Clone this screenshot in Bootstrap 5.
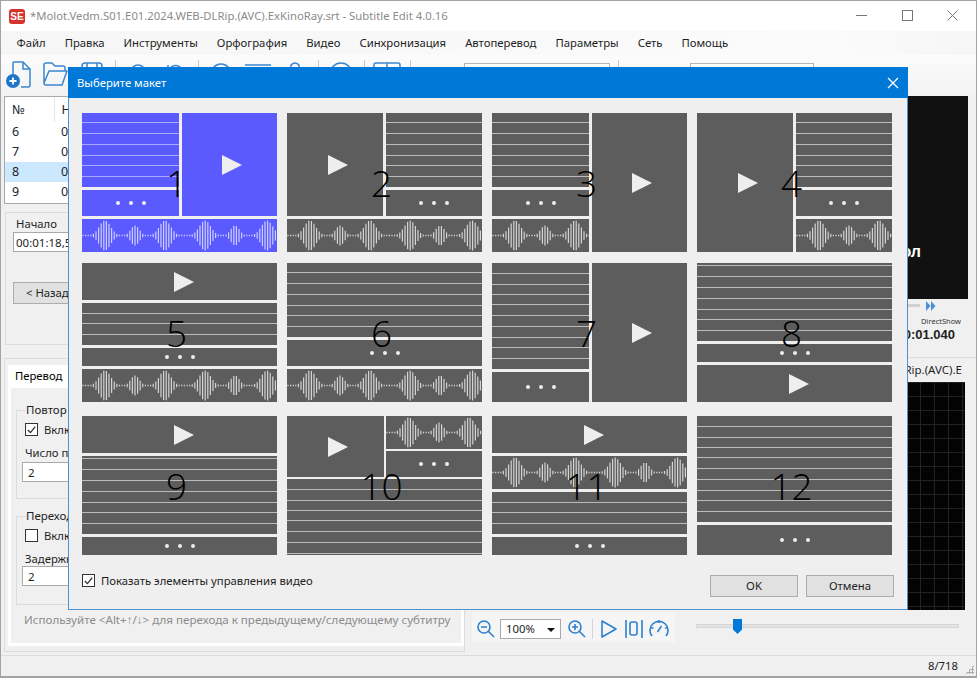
<!DOCTYPE html>
<html lang="ru">
<head>
  <meta charset="UTF-8">
  <title>Subtitle Edit</title>
  <link href="https://cdn.jsdelivr.net/npm/bootstrap@5.3.0/dist/css/bootstrap.min.css" rel="stylesheet">
  <style>
    html, body { height: 100%; }
    body { margin: 0; background: #f0f0f0; color: #1e1e1e; font: 11.3px/16px "Noto Sans", sans-serif; overflow: hidden; }
    .app { position: relative; height: 678px; border: 1px solid #a3a3a3; border-bottom-width: 2px; overflow: hidden; }

    /* window chrome */
    .titlebar { height: 30px; background: #fff; color: #8b8b8b; padding-left: 8px; }
    .logo { width: 16px; height: 15px; border-radius: 3px; background: #d8322c; color: #fff; font: bold 10px/15px "Liberation Sans", sans-serif; text-align: center; margin-right: 5px; }
    .win-btns { margin-left: auto; margin-top: -2px; }
    .win-btns svg { display: block; width: 11px; height: 11px; margin: 0 18px 0 16.5px; stroke: #777; fill: none; }
    .menubar { height: 24px; background: linear-gradient(90deg, #f6f6f6, #fbfbfb 85%, #f6f6f6); padding-left: 6px; flex-wrap: nowrap; }
    .menubar .nav-link { color: #1e1e1e; font-size: 11.3px; padding: 4px 9.5px; white-space: nowrap; }
    .toolbar { height: 41px; background: linear-gradient(#fcfcfc, #f2f2f2); padding-top: 5px; margin-left: -2px; }
    .tb { width: 37px; height: 30px; display: flex; justify-content: center; flex: none; }
    .tb svg { width: 28px; height: 30px; fill: none; stroke: #3b86cf; stroke-width: 1.5; }
    .sep { width: 1px; height: 30px; background: #c9c9c9; margin: 0 3px 0 5px; flex: none; }
    .tb-combo { height: 21px; margin-top: 3px; border: 1px solid #b5b5b5; background: #fff; flex: none; }

    /* left column */
    .main { height: 559px; }
    .left-col { width: 464px; flex: none; padding: 0 0 0 3px; }
    .subs { height: 108px; width: 462px; background: #fff; border: 1px solid #a9a9a9; margin-bottom: 8px; overflow: hidden; font-size: 12.5px; }
    .subs table { margin: 0; --bs-table-bg: transparent; }
    .subs th, .subs td { border: 0; font-weight: 400; padding: 2px 7px; line-height: 16px; }
    .subs th { height: 25px; border-right: 1px solid #e5e5e5; vertical-align: middle; }
    .subs tr.sel td { background: #cce8ff; }
    .subs td { height: 20px; }
    .edit-box { height: 133px; border: 1px solid #dcdcdc; padding: 3px 7px; margin-bottom: 13px; margin-left: 1px; }
    .win-input { height: 20px; border: 1px solid #a9a9a9; background: #fff; padding: 1px 2px; border-radius: 0; font-size: 11.5px; line-height: 16px; color: #1e1e1e; }
    .win-btn { background: #e1e1e1; border: 1px solid #adadad; border-radius: 0; color: #1e1e1e; font-size: 11.3px; line-height: 16px; padding: 2px 12px; }
    .tab-box { height: 294px; border: 1px solid #dcdcdc; padding: 6px 0 0 3px; }
    .tab-box .nav-tabs { border: 0; }
    .tab-box .nav-link { background: #fff; border: 0; border-radius: 0; color: #1e1e1e; height: 23px; padding: 3px 7px; width: 60px; }
    .tab-pane-box { height: 259px; background: #f0f0f0; border: 3px solid #fff; border-top: 0; padding: 15px 5px 0; }
    .grp { border: 1px solid #dcdcdc; padding: 4px 5px 0 5px; margin-bottom: 9px; }
    .grp-a { height: 97px; }
    .grp-b { height: 97px; margin-bottom: 7px; }
    .grp > legend { float: none; width: auto; font-size: 11.5px; line-height: 16px; margin: 0 0 0 4px; padding: 0 3px 0 0; }
    .grp .form-check { margin: 0 0 7px 3px; padding: 0; min-height: 0; }
    .grp .lbl { padding-left: 3px; }
    .grp .win-input { width: 200px; margin-top: 1px; padding-left: 5px; }
    .grp-b .win-input { margin-top: -1px; }
    .hint { color: #8c8c8c; font-size: 11.6px; margin: 0 0 0 8px; white-space: nowrap; }

    .form-check .form-check-input { width: 13px; height: 13px; margin: 0 6px 0 0; border: 1px solid #333; border-radius: 0; float: none; vertical-align: -2px; }
    .form-check .form-check-input:checked { background-color: #fff; border-color: #333; background-size: 11px; background-image: url("data:image/svg+xml,%3Csvg xmlns='http://www.w3.org/2000/svg' viewBox='0 0 12 12'%3E%3Cpath fill='none' stroke='%23333' stroke-width='1.3' d='M2 6.5l2.8 2.8L10 3'/%3E%3C/svg%3E"); }

    /* right column */
    .right-col { flex: 1 1 0; min-width: 0; padding-left: 7px; }
    .video { height: 203px; background: #111; color: #fff; margin-right: 8px; padding: 146px 47px 0 0; font: bold 16px/20px "Liberation Sans", sans-serif; text-align: right; }
    .vid-ctl { height: 59px; padding-right: 14px; text-align: right; border-bottom: 1px solid #dcdcdc; }
    .vid-seek { height: 13px; padding-right: 26px; }
    .vid-seek i { width: 12px; height: 3px; background: #d0d0d0; margin-right: 6px; }
    .vid-seek svg { width: 10px; height: 10px; fill: #4c8fd6; }
    .vid-name { font-size: 7.5px; line-height: 12px; margin-top: 3px; color: #333; padding-right: 1px; }
    .vid-time { font: bold 13px/16px "Liberation Sans", sans-serif; color: #222; padding-right: 7px; }
    .wave-name { height: 24px; line-height: 24px; font-size: 11.5px; text-align: right; padding-right: 14px; white-space: nowrap; }
    .spectro { height: 228px; margin-right: 11px; background-color: #030303; background-image: linear-gradient(#222 1px, transparent 1px), linear-gradient(90deg, #222 1px, transparent 1px); background-size: 14px 14px; }
    .wave-tools { height: 28px; margin-top: 2px; }
    .wave-tools .group { background: #f5f5f5; height: 30px; width: 203px; padding: 3px 0 0 4px; flex: none; }
    .wave-tools svg { width: 20px; height: 20px; fill: none; stroke: #2f80cf; stroke-width: 1.6; flex: none; }
    .zoom-sel { width: 61px; height: 20px; margin: 0 6px 0 4px; border: 1px solid #a9a9a9; background: #fff; padding: 1px 5px; position: relative; flex: none; }
    .zoom-sel::after { content: ""; position: absolute; right: 5px; top: 8px; border: 4px solid transparent; border-top: 4px solid #111; border-bottom: 0; }
    .tool-sep { width: 1px; height: 20px; background: #d5d5d5; margin: 0 6px 0 5px; flex: none; }
    .tool-gap { margin-left: 5px; }
    .slider { width: 263px; height: 4px; margin-left: 21px; margin-top: 12px; background: #e3e3e3; border: 1px solid #d6d6d6; position: relative; flex: none; }
    .slider i { position: absolute; left: 36px; top: -6px; width: 9px; height: 15px; background: #0078d7; clip-path: polygon(0 0, 100% 0, 100% 70%, 50% 100%, 0 70%); }
    .status { height: 21px; border-top: 1px solid #dcdcdc; text-align: right; padding: 2px 18px 0 0; position: relative; }
    .grip { position: absolute; right: 2px; bottom: 2px; width: 9px; height: 9px; background: radial-gradient(circle, #aaa 1px, transparent 1.2px) 0 0 / 3px 3px; clip-path: polygon(100% 0, 100% 100%, 0 100%); }

    /* layout dialog */
    .dlg { position: absolute; left: 67px; top: 66px; width: 840px; height: 543px; background: #efefef; border: 1px solid #4f92d4; border-top: 0; border-radius: 0; }
    .dlg-head { height: 31px; background: #0078d7; color: #fff; padding: 0 9px 0 9px; margin: 0 -1px; border-radius: 0; }
    .dlg-head svg { width: 12px; height: 12px; stroke: #fff; stroke-width: 1.3; display: block; }
    .dlg-close { background: none; border: 0; padding: 0; }
    .tiles { padding: 15px 0 0 13px; }
    .tile-row { gap: 10px; }
    .tile-row + .tile-row { margin-top: 11px; }
    .tile-row.r3 { margin-top: 14px; }
    .tile { position: relative; width: 195px; height: 139px; display: grid; gap: 3px; flex: none; }
    .pane { background: #5d5d5d; color: #d4d4d4; overflow: hidden; min-width: 0; }
    .tile.sel .pane { background: #5a5aff; color: #cfcfff; }
    .pane.lines { color: #bcbcbc; }
    .tile.sel .pane.lines { color: #a9a9ff; }
    .pane svg { display: block; width: 195px; height: 140px; }
    .lines use { fill: currentColor; }
    .wave use { stroke: currentColor; stroke-width: 1.2; fill: none; }
    .vid { display: flex; align-items: center; justify-content: center; }
    .vid::before { content: ""; margin-left: 5px; border-left: 20px solid #eee; border-top: 10px solid transparent; border-bottom: 10px solid transparent; }
    .t5 .vid::before, .t8 .vid::before, .t9 .vid::before, .t11 .vid::before { margin-left: 9px; }
    .dots { display: flex; align-items: center; justify-content: center; }
    .dots::before { content: ""; width: 4px; height: 4px; border-radius: 50%; background: #eee; box-shadow: 13px 0 #eee, -13px 0 #eee; }
    .c-all { grid-column: 1 / -1; }
    .r-2 { grid-row: span 2; }
    .r-3 { grid-row: span 3; }
    .num { position: absolute; inset: 0; display: flex; align-items: center; justify-content: center; color: #000; font: 300 37px/1 "Open Sans", sans-serif; padding: 0 6px 0 0; }
    .t1, .t3, .t7 { grid-template-columns: 97px 95px; }
    .t2, .t4 { grid-template-columns: 96px 96px; }
    .t1, .t2, .t3, .t4, .t6 { grid-template-rows: 74px 26px 33px; }
    .t5 { grid-template-rows: 37px 42px 18px 33px; }
    .t7, .t12 { grid-template-rows: 106px 30px; }
    .t8 { grid-template-rows: 78px 18px 37px; }
    .t9 { grid-template-rows: 37px 78px 18px; }
    .t10 { grid-template-columns: 97px 96px; grid-template-rows: 33px 26px 76px; gap: 2px; }
    .t11 { grid-template-rows: 37px 33px 42px 18px; }
    .dlg-foot { padding: 20px 13px 0 13px; }
    .dlg-foot .form-check { padding: 0; margin: -2px 0 0; min-height: 0; }
    .dlg-foot .win-btn { width: 88px; height: 22px; padding: 2px 0; }
  </style>
</head>
<body>
  <svg width="0" height="0" class="d-block position-absolute">
    <defs>
      <symbol id="l6" width="195" height="140"><path d="M0 9h195v1H0zM0 20h195v1H0zM0 31h195v1H0zM0 42h195v1H0zM0 52h195v1H0zM0 63h195v1H0z"/></symbol>
      <symbol id="l9" width="195" height="140"><path d="M0 10h195v1H0zM0 21h195v1H0zM0 31h195v1H0zM0 41h195v1H0zM0 52h195v1H0zM0 63h195v1H0zM0 74h195v1H0zM0 84h195v1H0zM0 95h195v1H0z"/></symbol>
      <symbol id="l7" width="195" height="140"><path d="M0 2h195v1H0zM0 13h195v1H0zM0 24h195v1H0zM0 35h195v1H0zM0 46h195v1H0zM0 56h195v1H0zM0 67h195v1H0z"/></symbol>
      <symbol id="l3" width="195" height="140"><path d="M0 10h195v1H0zM0 20h195v1H0zM0 31h195v1H0z"/></symbol>
      <symbol id="wv" width="195" height="33"><path id="wavePath"/></symbol>
    </defs>
  </svg>

  <div class="app d-flex flex-column">
    <div class="titlebar d-flex align-items-center">
      <span class="logo">SE</span>
      <span>*Molot.Vedm.S01.E01.2024.WEB-DLRip.(AVC).ExKinoRay.srt - Subtitle Edit 4.0.16</span>
      <div class="win-btns d-flex">
        <svg viewBox="0 0 11 11"><path d="M0 5.5h11"/></svg>
        <svg viewBox="0 0 11 11"><rect x=".5" y=".5" width="10" height="10"/></svg>
        <svg viewBox="0 0 11 11"><path d="M.5.5l10 10M10.5.5l-10 10"/></svg>
      </div>
    </div>

    <nav class="nav menubar">
      <a class="nav-link" href="#">Файл</a>
      <a class="nav-link" href="#">Правка</a>
      <a class="nav-link" href="#">Инструменты</a>
      <a class="nav-link" href="#">Орфография</a>
      <a class="nav-link" href="#">Видео</a>
      <a class="nav-link" href="#">Синхронизация</a>
      <a class="nav-link" href="#">Автоперевод</a>
      <a class="nav-link" href="#">Параметры</a>
      <a class="nav-link" href="#">Сеть</a>
      <a class="nav-link" href="#">Помощь</a>
    </nav>

    <div class="toolbar d-flex">
      <div class="tb"><svg viewBox="0 0 28 30"><path d="M9 14V3q0-1 1-1h9l7 7v16q0 2-2 2h-7M19 2v7h7"/><circle cx="9" cy="21" r="7" fill="#1f75c9" stroke="none"/><path d="M5.5 21h7M9 17.500v7" stroke="#fff" stroke-width="1.800"/></svg></div>
      <div class="tb"><svg viewBox="0 0 28 30"><path d="M3 23V5q0-2 2-2h6l3 3h8q2 0 2 2v3M3 23q0 2 2 2h16l5-14H8z" stroke-linejoin="round"/></svg></div>
      <div class="tb"><svg viewBox="0 0 28 30"><rect x="4" y="3" width="20" height="22" rx="3"/><path d="M9 3v6h10V3"/></svg></div>
      <i class="sep"></i>
      <div class="tb"><svg viewBox="0 0 28 30"><circle cx="14" cy="12" r="7"/></svg></div>
      <div class="tb"><svg viewBox="0 0 28 30"><path d="M7 12a8 8 0 1 1 3 8M7 5v7h7"/></svg></div>
      <i class="sep"></i>
      <div class="tb"><svg viewBox="0 0 28 30"><circle cx="14" cy="14" r="10"/></svg></div>
      <div class="tb"><svg viewBox="0 0 28 30"><path d="M1 5h26M1 12h26"/></svg></div>
      <div class="tb"><svg viewBox="0 0 28 30"><path d="M3 8h7V5q4-4 8 0v3h7v14H3z"/></svg></div>
      <i class="sep"></i>
      <div class="tb"><svg viewBox="0 0 28 30"><circle cx="14" cy="14" r="11"/></svg></div>
      <i class="sep"></i>
      <div class="tb"><svg viewBox="0 0 28 30"><rect x="1" y="3" width="26" height="20" rx="2"/><path d="M14 3v20"/></svg></div>
      <i class="sep"></i>
      <div class="tb-combo" style="width:146px;margin-left:50px"></div>
      <i class="sep" style="margin-left:8px"></i>
      <div class="tb-combo" style="width:124px;margin-left:68px"></div>
    </div>

    <div class="main d-flex">
      <section class="left-col">
        <div class="subs">
          <table class="table table-sm">
            <thead><tr><th style="width:49px">№</th><th>Начало</th></tr></thead>
            <tbody>
              <tr><td>6</td><td>00:01:08,000</td></tr>
              <tr><td>7</td><td>00:01:13,000</td></tr>
              <tr class="sel"><td>8</td><td>00:01:18,570</td></tr>
              <tr><td>9</td><td>00:01:21,000</td></tr>
            </tbody>
          </table>
        </div>
        <div class="edit-box">
          <div style="padding-left:3px">Начало</div>
          <input class="win-input d-block" style="width:140px;margin:0 0 30px" value="00:01:18,570">
          <button class="win-btn" style="width:100px;height:22px;text-align:left">&lt; Назад</button>
        </div>
        <div class="tab-box">
          <ul class="nav nav-tabs"><li class="nav-item"><a class="nav-link active" href="#">Перевод</a></li></ul>
          <div class="tab-pane-box">
            <fieldset class="grp grp-a">
              <legend>Повтор</legend>
              <div class="form-check"><input class="form-check-input" type="checkbox" checked>Включить</div>
              <div class="lbl">Число повторов</div>
              <input class="win-input d-block" value="2">
            </fieldset>
            <fieldset class="grp grp-b">
              <legend>Переход</legend>
              <div class="form-check"><input class="form-check-input" type="checkbox">Включить</div>
              <div class="lbl">Задержка</div>
              <input class="win-input d-block" value="2">
            </fieldset>
            <div class="hint">Используйте &lt;Alt+↑/↓&gt; для перехода к предыдущему/следующему субтитру</div>
          </div>
        </div>
      </section>

      <section class="right-col">
        <div class="video">ол</div>
        <div class="vid-ctl">
          <div class="vid-seek d-flex justify-content-end align-items-center"><i></i><svg viewBox="0 0 10 10"><path d="M0 0l4.500 5L0 10zM5 0l4.500 5L5 10z"/></svg></div>
          <div class="vid-name">DirectShow</div>
          <div class="vid-time">00:00:01.040</div>
        </div>
        <div class="wave-name">Molot.Vedm.S01.E01.2024.WEB-DLRip.(AVC).E</div>
        <div class="spectro"></div>
        <div class="wave-tools d-flex align-items-start">
          <div class="group d-flex align-items-center">
            <svg viewBox="0 0 20 20"><circle cx="8" cy="8" r="6"/><path d="M5 8h6M12.500 12.500L18 18"/></svg>
            <div class="zoom-sel">100%</div>
            <svg viewBox="0 0 20 20"><circle cx="8" cy="8" r="6"/><path d="M5 8h6M8 5v6M12.500 12.500L18 18"/></svg>
            <i class="tool-sep"></i>
            <svg viewBox="0 0 20 20"><path d="M3 2l14 8-14 8z" stroke-linejoin="round"/></svg>
            <svg class="tool-gap" viewBox="0 0 20 20"><path d="M2 1v18M18 1v18"/><rect x="6" y="3" width="7" height="13" rx="2"/></svg>
            <svg class="tool-gap" viewBox="0 0 20 20"><path d="M3 17a9 9 0 1 1 14 0M10 1v3M2 9h2.500M16 9h2.500M8.500 13l4-6"/></svg>
          </div>
          <div class="slider"><i></i></div>
        </div>
      </section>
    </div>

    <footer class="status">8/718<i class="grip"></i></footer>

    <div class="dlg modal-content d-block">
      <div class="dlg-head d-flex align-items-center justify-content-between">
        <span>Выберите макет</span>
        <button class="dlg-close" type="button"><svg viewBox="0 0 12 12"><path d="M1 1l10 10M11 1L1 11"/></svg></button>
      </div>
      <div class="tiles">
        <div class="tile-row d-flex">
          <div class="tile sel t1"><div class="pane lines"><svg><use href="#l6"/></svg></div><div class="pane vid r-2"></div><div class="pane dots"></div><div class="pane wave c-all"><svg><use href="#wv"/></svg></div><span class="num">1</span></div>
          <div class="tile t2"><div class="pane vid r-2"></div><div class="pane lines"><svg><use href="#l6"/></svg></div><div class="pane dots"></div><div class="pane wave c-all"><svg><use href="#wv"/></svg></div><span class="num">2</span></div>
          <div class="tile t3"><div class="pane lines"><svg><use href="#l6"/></svg></div><div class="pane vid r-3"></div><div class="pane dots"></div><div class="pane wave"><svg><use href="#wv"/></svg></div><span class="num">3</span></div>
          <div class="tile t4"><div class="pane vid r-3"></div><div class="pane lines"><svg><use href="#l6"/></svg></div><div class="pane dots"></div><div class="pane wave"><svg><use href="#wv"/></svg></div><span class="num">4</span></div>
        </div>
        <div class="tile-row d-flex">
          <div class="tile t5"><div class="pane vid"></div><div class="pane lines"><svg><use href="#l3"/></svg></div><div class="pane dots"></div><div class="pane wave"><svg><use href="#wv"/></svg></div><span class="num">5</span></div>
          <div class="tile t6"><div class="pane lines"><svg><use href="#l6"/></svg></div><div class="pane dots"></div><div class="pane wave"><svg><use href="#wv"/></svg></div><span class="num">6</span></div>
          <div class="tile t7"><div class="pane lines"><svg><use href="#l9"/></svg></div><div class="pane vid r-2"></div><div class="pane dots"></div><span class="num">7</span></div>
          <div class="tile t8"><div class="pane lines"><svg><use href="#l7"/></svg></div><div class="pane dots"></div><div class="pane vid"></div><span class="num">8</span></div>
        </div>
        <div class="tile-row r3 d-flex">
          <div class="tile t9"><div class="pane vid"></div><div class="pane lines"><svg><use href="#l7"/></svg></div><div class="pane dots"></div><span class="num">9</span></div>
          <div class="tile t10"><div class="pane vid r-2"></div><div class="pane wave"><svg><use href="#wv"/></svg></div><div class="pane dots"></div><div class="pane lines c-all"><svg><use href="#l9"/></svg></div><span class="num">10</span></div>
          <div class="tile t11"><div class="pane vid"></div><div class="pane wave"><svg><use href="#wv"/></svg></div><div class="pane lines"><svg><use href="#l3"/></svg></div><div class="pane dots"></div><span class="num">11</span></div>
          <div class="tile t12"><div class="pane lines"><svg><use href="#l9"/></svg></div><div class="pane dots"></div><span class="num">12</span></div>
        </div>
      </div>
      <div class="dlg-foot d-flex justify-content-between align-items-start">
        <label class="form-check"><input class="form-check-input" type="checkbox" checked>Показать элементы управления видео</label>
        <div class="d-flex gap-2">
          <button class="win-btn" type="button">OK</button>
          <button class="win-btn" type="button">Отмена</button>
        </div>
      </div>
    </div>
  </div>

  <script src="https://cdn.jsdelivr.net/npm/bootstrap@5.3.0/dist/js/bootstrap.bundle.min.js"></script>
  <script>
    // waveform used by every layout tile: [centre, height, spread]
    const clusters = [[23, 15, 8], [53, 10, 6], [83, 15, 8], [123, 15, 8], [153, 10, 6], [185, 15, 8]];
    let d = "";
    for (let x = 1; x < 195; x += 2.6) {
      let amp = 0.8;
      clusters.forEach(c => {
        amp = Math.max(amp, c[1] * Math.exp(-Math.pow((x - c[0]) / c[2], 2)));
      });
      d += "M" + x.toFixed(1) + " " + (16.5 - amp).toFixed(1) + "V" + (16.5 + amp).toFixed(1);
    }
    document.getElementById("wavePath").setAttribute("d", d);
  </script>
</body>
</html>
